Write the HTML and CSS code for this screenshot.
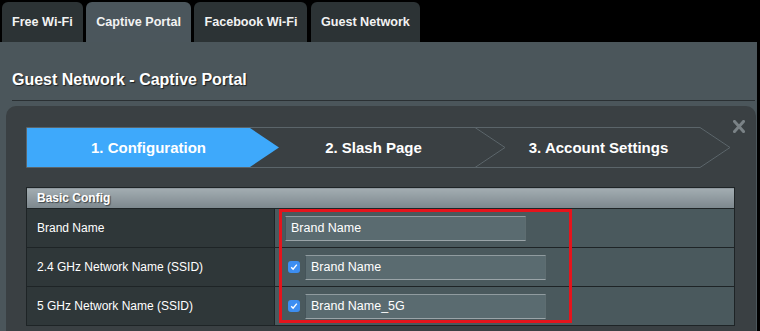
FILE: index.html
```html
<!DOCTYPE html>
<html>
  <head>
    <title>Guest Network - Captive Portal</title>
    <link rel="stylesheet" href="styles.css">
  </head>
  <body>
    <div class="tabs">
      <div class="tab">Free Wi-Fi</div>
      <div class="tab active">Captive Portal</div>
      <div class="tab">Facebook Wi-Fi</div>
      <div class="tab">Guest Network</div>
    </div>

    <div class="page">
      <h1 class="page-title">Guest Network - Captive Portal</h1>

      <div class="panel">
        <div class="panel-top">
          <div class="steps">
            <svg class="steps-bg" width="705" height="41" viewBox="0 0 705 41">
              <path d="M0.5 0.5H674M0.5 40.5H674M0.5 0.5V40.5M449 0.5L479 20.5L449 40.5M674 0.5L704 20.5L674 40.5"
                    fill="none" stroke="#5b656a" stroke-width="1"/>
              <polygon points="1,1 224,1 253,20.5 224,40 1,40" fill="#3ea9fb"/>
            </svg>
            <div class="step-labels">
              <div class="step">1. Configuration</div>
              <div class="step">2. Slash Page</div>
              <div class="step">3. Account Settings</div>
            </div>
          </div>
          <div class="close" title="Close">
            <svg width="12" height="13" viewBox="0 0 12 13">
              <path d="M1.5 1.5L10.5 11.5M10.5 1.5L1.5 11.5" stroke="#7a8286" stroke-width="3" stroke-linecap="square"/>
            </svg>
          </div>
        </div>

        <div class="config-wrap">
          <table class="config">
            <tr>
              <th colspan="2">Basic Config</th>
            </tr>
            <tr>
              <td class="label">Brand Name</td>
              <td class="value">
                <div class="field">
                  <input class="text-input" type="text" value="Brand Name">
                </div>
              </td>
            </tr>
            <tr>
              <td class="label">2.4 GHz Network Name (SSID)</td>
              <td class="value">
                <div class="field">
                  <span class="check">
                    <svg width="12" height="12" viewBox="0 0 12 12">
                      <path d="M3.2 6.3L5.1 8.3L8.8 3.6" fill="none" stroke="#fff" stroke-width="1.4"/>
                    </svg>
                  </span>
                  <input class="text-input" type="text" value="Brand Name">
                </div>
              </td>
            </tr>
            <tr>
              <td class="label">5 GHz Network Name (SSID)</td>
              <td class="value">
                <div class="field">
                  <span class="check">
                    <svg width="12" height="12" viewBox="0 0 12 12">
                      <path d="M3.2 6.3L5.1 8.3L8.8 3.6" fill="none" stroke="#fff" stroke-width="1.4"/>
                    </svg>
                  </span>
                  <input class="text-input" type="text" value="Brand Name_5G">
                </div>
              </td>
            </tr>
          </table>
          <div class="highlight"></div>
        </div>
      </div>
    </div>
  </body>
</html>
```

FILE: styles.css
```css
body {
  margin: 0;
  background-color: #000;
  font-family: "Liberation Sans", Arial, sans-serif;
  color: #fff;
  overflow: hidden;
}

.tabs {
  display: flex;
  gap: 3.5px;
  height: 40px;
  padding: 2px 0 0 2px;
}

.tab {
  display: flex;
  align-items: center;
  padding: 0 10px;
  background-color: #2c3335;
  border-radius: 6px 6px 0 0;
  font-size: 12.6px;
  font-weight: bold;
  color: #f2f2f2;
}

.tab.active {
  background-color: #4b565c;
}

.page {
  width: 757px;
  height: 289px;
  overflow: hidden;
  background-color: #4b565b;
  padding-top: 28px;
  box-sizing: border-box;
}

.page-title {
  margin: 0 2px 0 12px;
  padding-bottom: 10px;
  font-size: 16px;
  line-height: 20px;
  color: #fff;
  text-shadow: 1px 1px 1px #1b1f21;
  border-bottom: 1px solid #2a3033;
}

.panel {
  margin: 5px 1px 0 6px;
  padding: 13px 21px 20px 20px;
  background-color: #3a4043;
  border-radius: 10px 10px 0 0;
}

.panel-top {
  display: flex;
  align-items: flex-start;
}

.steps {
  display: grid;
  margin-top: 8px;
  width: 705px;
  height: 41px;
}

.steps-bg,
.step-labels {
  grid-area: 1 / 1;
}

.step-labels {
  display: grid;
  grid-template-columns: 225px 225px 225px;
  padding-left: 10px;
  align-items: center;
}

.step {
  text-align: center;
  font-size: 15px;
  font-weight: bold;
  color: #fff;
}

.close {
  margin-left: 2px;
  width: 12px;
  height: 13px;
  cursor: pointer;
}

.config-wrap {
  position: relative;
  margin-top: 19px;
  width: 709px;
}

.config {
  width: 709px;
  border-collapse: collapse;
  border: 1px solid #1e2426;
}

.config th {
  height: 20px;
  padding: 0 0 0 10px;
  text-align: left;
  font-size: 12px;
  color: #fff;
  text-shadow: 1px 1px 1px #3c4448;
  background: linear-gradient(#a3adb2, #7c878d);
  border-bottom: 1px solid #1e2426;
}

.config td {
  height: 38px;
  padding: 0;
  border-bottom: 1px solid #1e2426;
  font-size: 12px;
}

.config td.label {
  width: 237px;
  padding-left: 10px;
  background-color: #2f3739;
  border-right: 1px solid #1e2426;
}

.config td.value {
  padding-left: 10px;
  background-color: #4a595d;
}

.field {
  display: flex;
  align-items: center;
}

.check {
  display: flex;
  width: 12px;
  height: 12px;
  margin: 0 5px 0 3px;
  background-color: #3d8ef1;
  border-radius: 3px;
}

.text-input {
  width: 241px;
  height: 25px;
  box-sizing: border-box;
  padding: 0 5px;
  background-color: #5a6b70;
  border: 1px solid;
  border-color: #909b9f #5e6d71 #9aa4a8 #45545a;
  color: #fff;
  font-family: "Liberation Sans", Arial, sans-serif;
  font-size: 12.5px;
  outline: none;
}

.highlight {
  position: absolute;
  left: 253px;
  top: 22px;
  width: 293px;
  height: 114px;
  box-sizing: border-box;
  border: 3px solid #e5141c;
  pointer-events: none;
}
```
